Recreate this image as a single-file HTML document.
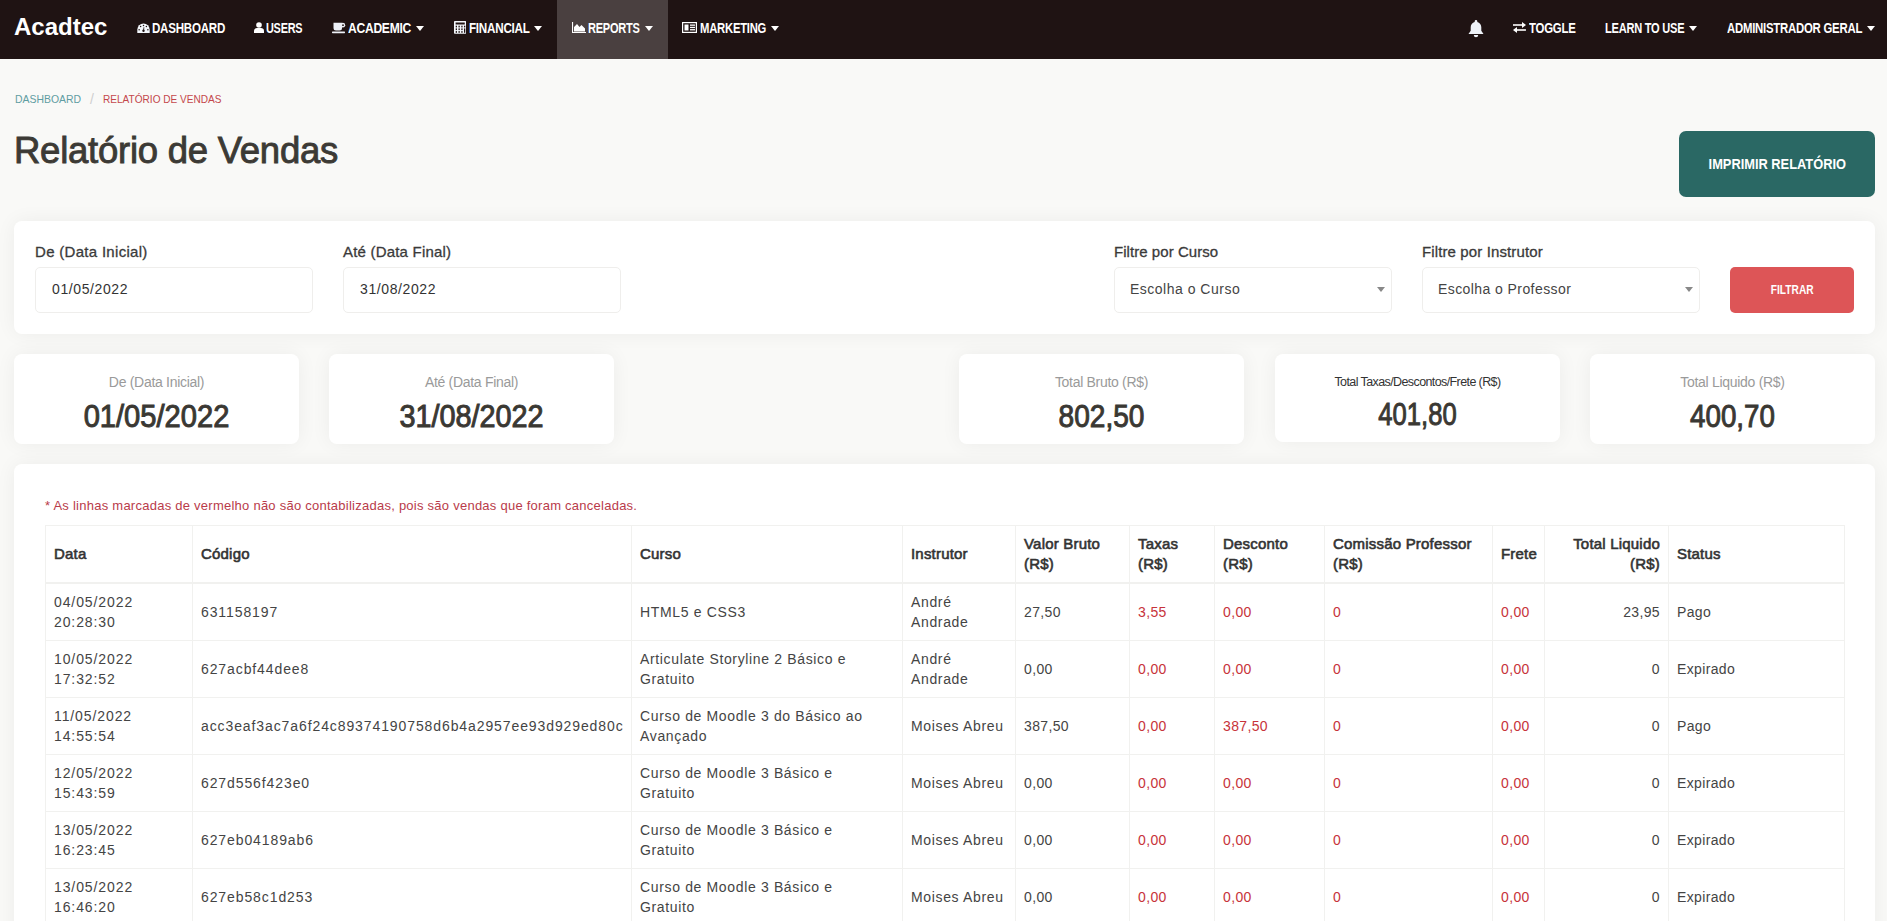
<!DOCTYPE html>
<html><head><meta charset="utf-8">
<style>
*{box-sizing:border-box;margin:0;padding:0}
html,body{width:1887px;height:921px;overflow:hidden;background:#f9f9f7;font-family:"Liberation Sans",sans-serif;color:#333}
.abs{position:absolute;white-space:nowrap}
#nav{position:absolute;left:0;top:0;width:1887px;height:59px;background:#1f1313}
#nav .act{position:absolute;left:557px;top:0;width:111px;height:59px;background:#4a4040}
.ni{position:absolute;top:21px;height:14px;line-height:14px;font-size:14px;font-weight:bold;color:#fff;letter-spacing:-0.3px;white-space:nowrap;transform-origin:0 0}
.caret{position:absolute;top:26px;width:0;height:0;border-left:4px solid transparent;border-right:4px solid transparent;border-top:5px solid #fff}
.logo{position:absolute;left:14px;top:13px;font-size:24px;line-height:28px;font-weight:bold;color:#fff;letter-spacing:0px}
svg.ic{position:absolute}
.bc{position:absolute;top:92px;font-size:11px;line-height:14px;white-space:nowrap;transform-origin:0 0}
h1{position:absolute;left:14px;top:129px;font-size:36.5px;line-height:44px;font-weight:normal;color:#3c3a35;letter-spacing:-0.25px;-webkit-text-stroke:0.9px #3c3a35;white-space:nowrap}
.btn-print{position:absolute;left:1679px;top:131px;width:196px;height:66px;background:#2a6864;border-radius:7px;color:#fff;font-weight:bold;font-size:15px;text-align:center;line-height:66px}
.btn-print span{display:inline-block;transform:scaleX(0.856);white-space:nowrap}
.card{position:absolute;background:#fff;border-radius:8px;box-shadow:0 0 20px rgba(0,0,0,0.055)}
.lbl{position:absolute;top:243px;font-size:15px;line-height:18px;color:#3a3a3a;letter-spacing:0.3px;-webkit-text-stroke:0.3px #3a3a3a;white-space:nowrap}
.inp{position:absolute;top:267px;width:278px;height:46px;border:1px solid #efeeec;border-radius:5px;background:#fff}
.inp span{position:absolute;left:16px;top:13px;font-size:14px;line-height:16px;color:#333;letter-spacing:0.6px;white-space:nowrap}
.inp i{position:absolute;right:6px;top:19px;width:0;height:0;border-left:4px solid transparent;border-right:4px solid transparent;border-top:5px solid #888}
.btn-f{position:absolute;left:1730px;top:267px;width:124px;height:46px;background:#dd5557;border-radius:5px;color:#fff;font-size:12px;font-weight:bold;text-align:center;line-height:46px}
.btn-f span{display:inline-block;transform:scaleX(0.85)}
.stat{position:absolute;top:354px;width:285px;height:90px}
.stat .t{position:absolute;left:0;right:0;top:20px;text-align:center;font-size:14px;line-height:16px;color:#9a9a9a;letter-spacing:-0.3px;white-space:nowrap}
.stat .v{position:absolute;left:0;right:0;top:46px;text-align:center;font-size:32px;line-height:32px;font-weight:normal;-webkit-text-stroke:1px #3a3833;color:#3a3833;white-space:nowrap;transform-origin:50% 0}
.note{position:absolute;left:45px;top:498px;font-size:13px;line-height:16px;color:#b93b4a;white-space:nowrap;letter-spacing:0.25px}
table{position:absolute;left:45px;top:525px;border-collapse:collapse;table-layout:fixed;width:1799px}
td,th{border:1px solid #f1f1ef;padding:8px;font-size:14px;line-height:20px;vertical-align:middle;text-align:left;color:#444;letter-spacing:0.9px}
th{font-weight:normal;-webkit-text-stroke:0.6px #333;font-size:15px;color:#333;border-bottom:2px solid #f1f1ef;letter-spacing:0.2px;height:57px;white-space:nowrap}
td{height:57px;letter-spacing:0.65px}
td:nth-child(1),td:nth-child(2){letter-spacing:0.9px}
td:nth-child(n+5){letter-spacing:0.35px}
.r{color:#c7333a}
.ra{text-align:right}
</style></head><body>
<div id="nav">
  <div class="act"></div>
  <div class="logo">Acadtec</div>
  <svg class="ic" style="left:136.5px;top:22.7px" width="13" height="10.5" viewBox="0 0 13 10.5"><path d="M.3 10.3V6.6A6.2 6.2 0 0 1 12.7 6.6V10.3z" fill="#f4f7fc"/><g fill="#1f1313"><circle cx="6.5" cy="2.5" r=".75"/><circle cx="3.6" cy="3.6" r=".75"/><circle cx="9.4" cy="3.6" r=".75"/><circle cx="2.1" cy="6.8" r=".75"/><circle cx="10.9" cy="6.8" r=".75"/><circle cx="6.5" cy="7.8" r="1.2"/></g><path d="M6.5 7.6L6.9 4.3" stroke="#1f1313" stroke-width=".8"/></svg>
  <div class="ni" style="left:152px;transform:scaleX(0.827)">DASHBOARD</div>
  <svg class="ic" style="left:254px;top:22px" width="10" height="11" viewBox="0 0 10 11"><circle cx="5" cy="3" r="2.8" fill="#fff"/><path d="M0 11v-2.2C0 7 1.5 6 3 6h4c1.5 0 3 1 3 2.8V11z" fill="#fff"/></svg>
  <div class="ni" style="left:266px;transform:scaleX(0.777)">USERS</div>
  <svg class="ic" style="left:332px;top:22px" width="14" height="12" viewBox="0 0 14 12"><path d="M1.5 .8h8.5v5.2a2.5 2.5 0 0 1-2.5 2.5H4a2.5 2.5 0 0 1-2.5-2.5z" fill="#eef1f8"/><circle cx="10.8" cy="3.2" r="2.4" fill="#eef1f8"/><circle cx="11" cy="3.2" r="0.9" fill="#1f1313"/><rect x="0" y="9.4" width="13" height="1.8" rx=".6" fill="#eef1f8"/></svg>
  <div class="ni" style="left:348px;transform:scaleX(0.863)">ACADEMIC</div><div class="caret" style="left:416px"></div>
  <svg class="ic" style="left:453.5px;top:21.3px" width="12.2" height="12.8" viewBox="0 0 12.2 12.8"><rect x="0" y="0" width="12.2" height="12.8" rx=".8" fill="#f4f7fc"/><g fill="#1f1313"><rect x="1.6" y="1.5" width="9.2" height="2"/><rect x="1.7" y="4.7" width="1.3" height="1.7"/><rect x="1.7" y="7.4" width="1.3" height="1.7"/><rect x="1.7" y="10.1" width="1.3" height="1.7"/><rect x="4.5" y="4.7" width="1.3" height="1.7"/><rect x="4.5" y="7.4" width="1.3" height="1.7"/><rect x="4.5" y="10.1" width="1.3" height="1.7"/><rect x="7.3" y="4.7" width="1.3" height="1.7"/><rect x="7.3" y="7.4" width="1.3" height="1.7"/><rect x="7.3" y="10.1" width="1.3" height="1.7"/><rect x="10.0" y="4.7" width="1.3" height="1.7"/><rect x="10.0" y="7.4" width="1.3" height="4.4"/></g></svg>
  <div class="ni" style="left:469px;transform:scaleX(0.833)">FINANCIAL</div><div class="caret" style="left:534px"></div>
  <svg class="ic" style="left:572px;top:22px" width="14" height="11" viewBox="0 0 14 11"><path d="M.5 0v10.5H14" fill="none" stroke="#fff" stroke-width="1.2"/><path d="M2 9.5V5l3-3 2.5 3 2-2 3.5 3.5v3z" fill="#fff"/></svg>
  <div class="ni" style="left:588px;transform:scaleX(0.788)">REPORTS</div><div class="caret" style="left:645px"></div>
  <svg class="ic" style="left:682px;top:22px" width="15" height="11" viewBox="0 0 15 11"><rect x=".6" y=".6" width="13.8" height="9.8" fill="none" stroke="#fff" stroke-width="1.2"/><rect x="2.5" y="2.5" width="4" height="6" fill="#fff"/><rect x="8" y="2.5" width="5" height="1.3" fill="#fff"/><rect x="8" y="4.8" width="5" height="1.3" fill="#fff"/><rect x="8" y="7.1" width="5" height="1.3" fill="#fff"/></svg>
  <div class="ni" style="left:700px;transform:scaleX(0.806)">MARKETING</div><div class="caret" style="left:771px"></div>
  <svg class="ic" style="left:1468px;top:20px" width="16" height="18" viewBox="0 0 16 18"><path d="M8 0c.8 0 1.3.6 1.3 1.3v.6C11.8 2.5 13.3 4.6 13.3 7.3v3.5l2.2 3.2H.5l2.2-3.2V7.3C2.7 4.6 4.2 2.5 6.7 1.9v-.6C6.7.6 7.2 0 8 0z" fill="#eef2f8"/><path d="M5.8 15h4.4a2.2 2.2 0 0 1-4.4 0z" fill="#eef2f8"/></svg>
  <svg class="ic" style="left:1513px;top:22px" width="13" height="11" viewBox="0 0 13 11"><path d="M0 3h10" stroke="#fff" stroke-width="1.6"/><path d="M9 0l4 3-4 3z" fill="#fff"/><path d="M3 8h10" stroke="#fff" stroke-width="1.6"/><path d="M4 5L0 8l4 3z" fill="#fff"/></svg>
  <div class="ni" style="left:1529px;transform:scaleX(0.816)">TOGGLE</div>
  <div class="ni" style="left:1605px;transform:scaleX(0.791)">LEARN TO USE</div><div class="caret" style="left:1689px"></div>
  <div class="ni" style="left:1727px;transform:scaleX(0.813)">ADMINISTRADOR GERAL</div><div class="caret" style="left:1867px"></div>
</div>

<div class="bc" style="left:15px;color:#5f9da2;transform:scaleX(0.947)">DASHBOARD</div>
<div class="bc" style="left:90px;top:91px;font-size:14px;line-height:16px;color:#cfcfcf">/</div>
<div class="bc" style="left:103px;color:#c4474b;transform:scaleX(0.916)">RELAT&Oacute;RIO DE VENDAS</div>

<h1>Relat&oacute;rio de Vendas</h1>
<div class="btn-print"><span>IMPRIMIR RELAT&Oacute;RIO</span></div>

<div class="card" style="left:14px;top:221px;width:1861px;height:113px"></div>
<div class="lbl" style="left:35px">De (Data Inicial)</div>
<div class="inp" style="left:35px"><span>01/05/2022</span></div>
<div class="lbl" style="left:343px;letter-spacing:0.2px">At&eacute; (Data Final)</div>
<div class="inp" style="left:343px"><span>31/08/2022</span></div>
<div class="lbl" style="left:1114px;letter-spacing:0.05px">Filtre por Curso</div>
<div class="inp" style="left:1114px"><span style="color:#444;left:15px;letter-spacing:0.5px">Escolha o Curso</span><i></i></div>
<div class="lbl" style="left:1422px;letter-spacing:0.12px">Filtre por Instrutor</div>
<div class="inp" style="left:1422px"><span style="color:#444;left:15px;letter-spacing:0.42px">Escolha o Professor</span><i></i></div>
<div class="btn-f"><span>FILTRAR</span></div>

<div class="card stat" style="left:14px"><div class="t">De (Data Inicial)</div><div class="v" style="transform:scaleX(0.91)">01/05/2022</div></div>
<div class="card stat" style="left:329px"><div class="t">At&eacute; (Data Final)</div><div class="v" style="transform:scaleX(0.90)">31/08/2022</div></div>
<div class="card stat" style="left:959px"><div class="t">Total Bruto (R$)</div><div class="v" style="transform:scaleX(0.877)">802,50</div></div>
<div class="card stat" style="left:1275px;height:88px"><div class="t" style="color:#333;font-size:12.5px;letter-spacing:-0.6px">Total Taxas/Descontos/Frete (R$)</div><div class="v" style="top:44px;transform:scaleX(0.80)">401,80</div></div>
<div class="card stat" style="left:1590px"><div class="t">Total Liquido (R$)</div><div class="v" style="transform:scaleX(0.867)">400,70</div></div>

<div class="card" style="left:14px;top:464px;width:1861px;height:600px"></div>
<div class="note">* As linhas marcadas de vermelho n&atilde;o s&atilde;o contabilizadas, pois s&atilde;o vendas que foram canceladas.</div>

<table>
<colgroup><col style="width:147px"><col style="width:439px"><col style="width:271px"><col style="width:113px"><col style="width:114px"><col style="width:85px"><col style="width:110px"><col style="width:168px"><col style="width:52px"><col style="width:124px"><col style="width:176px"></colgroup>
<thead><tr><th>Data</th><th>C&oacute;digo</th><th>Curso</th><th>Instrutor</th><th>Valor Bruto<br>(R$)</th><th>Taxas<br>(R$)</th><th>Desconto<br>(R$)</th><th>Comiss&atilde;o Professor<br>(R$)</th><th>Frete</th><th class="ra">Total Liquido<br>(R$)</th><th>Status</th></tr></thead>
<tbody>
<tr><td>04/05/2022 20:28:30</td><td>631158197</td><td>HTML5 e CSS3</td><td>Andr&eacute;<br>Andrade</td><td>27,50</td><td class="r">3,55</td><td class="r">0,00</td><td class="r">0</td><td class="r">0,00</td><td class="ra">23,95</td><td>Pago</td></tr>
<tr><td>10/05/2022 17:32:52</td><td>627acbf44dee8</td><td>Articulate Storyline 2 B&aacute;sico e<br>Gratuito</td><td>Andr&eacute;<br>Andrade</td><td>0,00</td><td class="r">0,00</td><td class="r">0,00</td><td class="r">0</td><td class="r">0,00</td><td class="ra">0</td><td>Expirado</td></tr>
<tr><td>11/05/2022 14:55:54</td><td>acc3eaf3ac7a6f24c89374190758d6b4a2957ee93d929ed80c</td><td>Curso de Moodle 3 do B&aacute;sico ao<br>Avan&ccedil;ado</td><td>Moises Abreu</td><td>387,50</td><td class="r">0,00</td><td class="r">387,50</td><td class="r">0</td><td class="r">0,00</td><td class="ra">0</td><td>Pago</td></tr>
<tr><td>12/05/2022 15:43:59</td><td>627d556f423e0</td><td>Curso de Moodle 3 B&aacute;sico e<br>Gratuito</td><td>Moises Abreu</td><td>0,00</td><td class="r">0,00</td><td class="r">0,00</td><td class="r">0</td><td class="r">0,00</td><td class="ra">0</td><td>Expirado</td></tr>
<tr><td>13/05/2022 16:23:45</td><td>627eb04189ab6</td><td>Curso de Moodle 3 B&aacute;sico e<br>Gratuito</td><td>Moises Abreu</td><td>0,00</td><td class="r">0,00</td><td class="r">0,00</td><td class="r">0</td><td class="r">0,00</td><td class="ra">0</td><td>Expirado</td></tr>
<tr><td>13/05/2022 16:46:20</td><td>627eb58c1d253</td><td>Curso de Moodle 3 B&aacute;sico e<br>Gratuito</td><td>Moises Abreu</td><td>0,00</td><td class="r">0,00</td><td class="r">0,00</td><td class="r">0</td><td class="r">0,00</td><td class="ra">0</td><td>Expirado</td></tr>
</tbody></table>
</body></html>
